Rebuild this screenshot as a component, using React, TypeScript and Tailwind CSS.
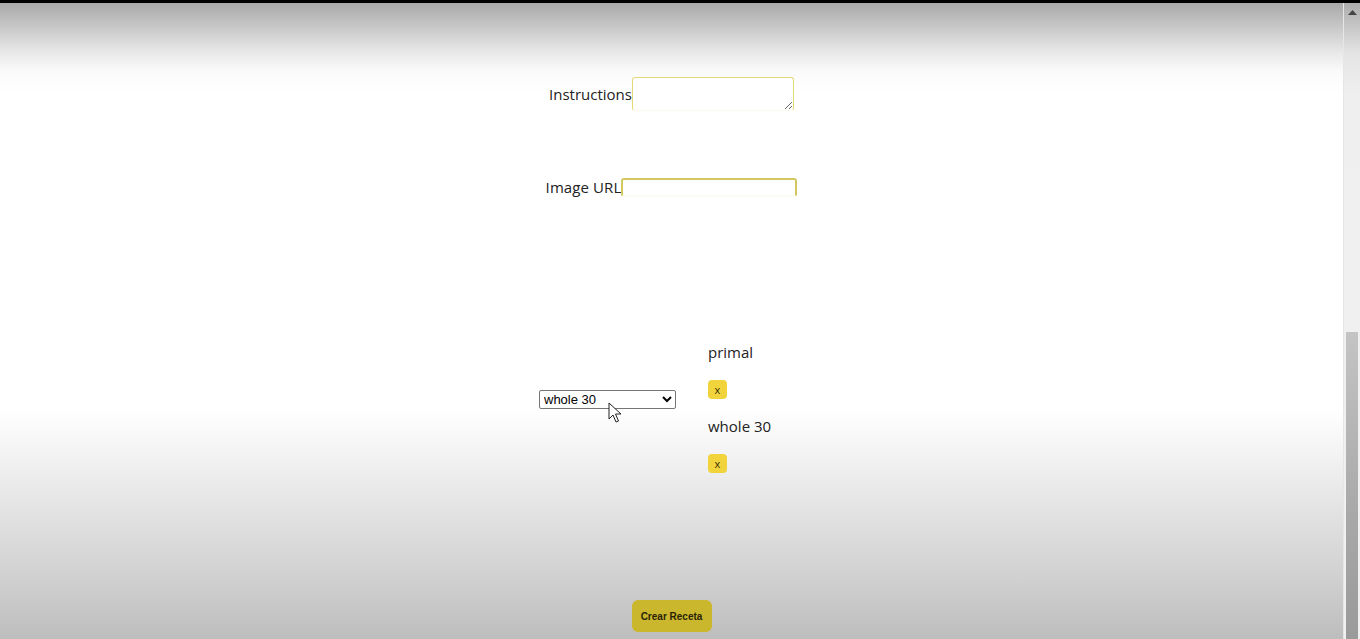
import React, { useState } from "react";

const diets = ["gluten free", "ketogenic", "vegetarian", "lacto ovo vegetarian", "vegan", "pescatarian", "paleolithic", "primal", "whole 30"];

const CreateRecipe = () => {
    const [instructions, setInstructions] = useState("");
    const [image, setImage] = useState("");
    const [selected, setSelected] = useState<string[]>(["primal", "whole 30"]);
    const [current, setCurrent] = useState("whole 30");

    // quita una dieta de la lista
    const removeDiet = (d: string) => setSelected(selected.filter((x) => x !== d));

    return (
        <div className="flex flex-col w-[1360px] h-[639px] overflow-hidden font-['Open_Sans',sans-serif] text-[#222]">
            <div className="h-[3px] bg-black" />
            <div className="flex flex-1">
                <main className="relative flex-1 flex flex-col items-center pt-[74px] bg-[linear-gradient(to_bottom,#a9a9a9_0px,#e9e9e9_50px,#fafafa_68px,#ffffff_90px,#ffffff_405px,#f6f6f6_440px,#e2e2e2_510px,#cfcfcf_580px,#bdbdbd_636px)]">
                    <div className="flex items-center">
                        <label className="text-[15px] leading-5">Instructions</label>
                        <textarea
                            value={instructions}
                            onChange={(e) => setInstructions(e.target.value)}
                            className="w-[162px] h-[34px] rounded-[3px] border border-[#e6da78] border-b-[#fbf9ea] bg-white outline-none resize"
                        />
                    </div>

                    <div className="flex items-center mt-[66px]">
                        <label className="text-[15px] leading-5 tracking-[0.1px]">Image URL</label>
                        <input
                            value={image}
                            onChange={(e) => setImage(e.target.value)}
                            className="w-[176px] h-[19px] rounded-[3px] border-2 border-[#d3c860] border-b-[#fdfcf2] bg-white outline-none"
                        />
                    </div>

                    <div className="flex items-start gap-[32px] mt-[145px]">
                        <select
                            value={current}
                            onChange={(e) => {
                                setCurrent(e.target.value);
                                if (!selected.includes(e.target.value)) setSelected([...selected, e.target.value]);
                            }}
                            className="mt-[48px] w-[137px] h-[19px] border border-[#767676] rounded-[2px] bg-white text-[13px] leading-4 font-['Liberation_Sans',Arial,sans-serif] text-black pl-0"
                        >
                            {diets.map((d) => (
                                <option key={d} value={d}>{d}</option>
                            ))}
                        </select>
                        <ul className="w-[96px] flex flex-col">
                            {selected.map((d) => (
                                <li key={d} className="flex flex-col items-start">
                                    <p className="text-[15px] leading-5 mb-[18px]">{d}</p>
                                    <button
                                        onClick={() => removeDiet(d)}
                                        className="w-[19px] h-[19px] mb-[17px] rounded-[4px] bg-[#f1d43c] text-[11px] leading-none text-[#3a3000] flex items-center justify-center"
                                    >
                                        x
                                    </button>
                                </li>
                            ))}
                        </ul>
                    </div>

                    <button className="mt-[110px] w-[80px] h-[32px] rounded-[6px] bg-[#cbb72d] text-[10px] font-bold text-[#2a2406] font-['Liberation_Sans',Arial,sans-serif]">
                        Crear Receta
                    </button>

                    <svg className="absolute left-[608px] top-[399px]" width="14" height="22" viewBox="0 0 14 22">
                        <path d="M1 1 L1 17 L5 13 L8 20 L10.5 19 L7.5 12 L13 12 Z" fill="#fff" stroke="#222" strokeWidth="1" strokeLinejoin="round" />
                    </svg>
                </main>

                <div className="w-[17px] flex flex-col bg-[linear-gradient(to_bottom,#acacac_0px,#e4e4e4_50px,#efefef_90px,#f0f0f0_330px)] border-l border-[#e6e6e6]">
                    <div className="h-[18px] flex items-center justify-center">
                        <svg width="9" height="5" viewBox="0 0 9 5">
                            <path d="M0 5 L4.5 0 L9 5 Z" fill="#444" />
                        </svg>
                    </div>
                    <div className="mt-[311px] mx-[2px] flex-1 bg-[linear-gradient(to_bottom,#c4c4c4,#a8a8a8_60%,#9a9a9a)]" />
                </div>
            </div>
        </div>
    );
};

export default CreateRecipe;
